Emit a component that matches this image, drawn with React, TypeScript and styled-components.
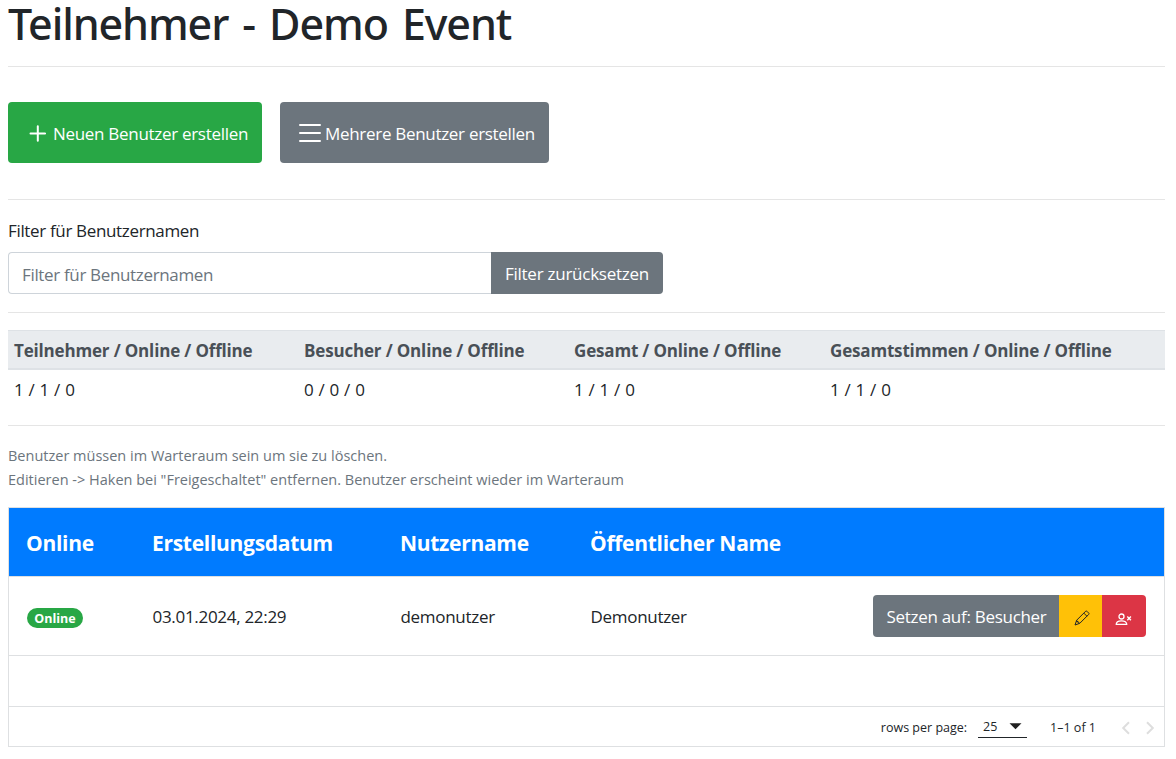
import React from "react";
import styled, { createGlobalStyle } from "styled-components";

const GlobalStyle = createGlobalStyle`
  *, *::before, *::after { box-sizing: border-box; }
  body {
    margin: 0;
    background: #fff;
    color: #212529;
    font-family: "Open Sans", "Noto Sans", sans-serif;
    font-size: 17px;
    line-height: 27px;
    letter-spacing: -0.3px;
  }
`;

const Page = styled.main`
  width: 1165px;
  padding-left: 8px;
  display: flex;
  flex-direction: column;
`;

const Title = styled.h1`
  margin: 0;
  height: 66px;
  font-family: "Noto Sans", sans-serif;
  font-weight: 500;
  font-size: 43px;
  line-height: 48px;
  letter-spacing: -1.1px;
  word-spacing: 4px;
`;

const Divider = styled.hr`
  width: 100%;
  height: 1px;
  margin: 0;
  border: 0;
  background: #e5e5e5;
`;

const CreateBar = styled.div`
  display: flex;
  gap: 18px;
  padding: 35px 0 36px;
`;

const Button = styled.button<{ $tone: "success" | "secondary" }>`
  display: flex;
  align-items: center;
  height: 61px;
  padding: 2px 0 0;
  border: 0;
  border-radius: 4px;
  color: #fff;
  background: ${(p) => (p.$tone === "success" ? "#28a745" : "#6c757d")};
  font: inherit;
  letter-spacing: -0.3px;
  white-space: nowrap;
`;

const AddButton = styled(Button)`
  width: 254px;
  padding-left: 21px;
  svg { margin: 0 7px 1px 0; }
`;

const BulkButton = styled(Button)`
  width: 269px;
  padding-left: 18px;
  svg { margin: 0 4px 1px 0; }
`;

const FilterSection = styled.section`
  display: flex;
  flex-direction: column;
  padding: 17px 0 18px;
`;

const Label = styled.label`
  height: 35px;
  line-height: 28px;
  letter-spacing: -0.34px;
`;

const InputGroup = styled.div`
  display: flex;
  width: 655px;
  height: 42px;
`;

const FilterInput = styled.input`
  width: 483px;
  padding: 3px 13px 0 13px;
  border: 1px solid #ced4da;
  border-right: 0;
  border-radius: 4px 0 0 4px;
  font: inherit;
  letter-spacing: -0.34px;
  &::placeholder { color: #6c757d; opacity: 1; }
`;

const ResetButton = styled(Button)`
  width: 172px;
  height: 42px;
  padding-top: 1px;
  justify-content: center;
  border-radius: 0 4px 4px 0;
  letter-spacing: -0.25px;
`;

const Stats = styled.table`
  width: 100%;
  margin: 17px 0 15px;
  border-collapse: separate;
  border-spacing: 0;
  table-layout: fixed;
  text-align: left;
`;

const StatCol = styled.col<{ $width: number }>`
  width: ${(p) => p.$width}px;
`;

const StatHead = styled.th`
  height: 40px;
  padding: 2px 5px 0 6px;
  border-top: 1px solid #dee2e6;
  border-bottom: 2px solid #dee2e6;
  background: #e9ecef;
  color: #495057;
  font-weight: 700;
  letter-spacing: -0.17px;
`;

const StatCell = styled.td`
  height: 40px;
  padding: 0 5px 2px 6px;
  letter-spacing: 0.2px;
`;

const Hint = styled.p`
  margin: 0;
  padding: 18px 0 15px;
  height: 81px;
  color: #6c757d;
  font-size: 14.5px;
  line-height: 24px;
  letter-spacing: 0;
`;

const UserPanel = styled.section`
  display: flex;
  flex-direction: column;
  border: 1px solid #dee0e2;
`;

const UserRow = styled.div`
  display: grid;
  grid-template-columns: 126px 248px 190px 282px 1fr;
  align-items: center;
  height: 79px;
  padding: 0 18px;
  border-bottom: 1px solid #dee0e2;
`;

const UserHeader = styled(UserRow)`
  height: 69px;
  padding: 3px 18px 0 17px;
  background: #007bff;
  color: #fff;
  font-size: 21px;
  font-weight: 700;
  letter-spacing: -0.29px;
`;

const Badge = styled.span`
  display: flex;
  width: 56px;
  height: 20px;
  margin-top: 4px;
  align-items: center;
  justify-content: center;
  border-radius: 10px;
  background: #28a745;
  color: #fff;
  font-size: 12.5px;
  font-weight: 700;
  letter-spacing: 0;
`;

const Cell = styled.span`
  margin-left: -0.5px;
`;

const Actions = styled.div`
  display: flex;
  width: 273px;
  height: 42px;
  overflow: hidden;
  border-radius: 4px;
`;

const StatusButton = styled(ResetButton)`
  width: 186px;
  padding: 0 0 0 1px;
  border-radius: 0;
  letter-spacing: -0.29px;
`;

const IconButton = styled.button<{ $danger?: boolean }>`
  display: flex;
  flex: none;
  width: ${(p) => (p.$danger ? 44 : 43)}px;
  align-items: center;
  justify-content: center;
  padding: ${(p) => (p.$danger ? "7px 1px 0 0" : "3px 0 0 2px")};
  border: 0;
  color: ${(p) => (p.$danger ? "#fff" : "#212529")};
  background: ${(p) => (p.$danger ? "#dc3545" : "#ffc107")};
`;

const EmptyRow = styled.div`
  height: 51px;
  border-bottom: 1px solid #dee0e2;
`;

const Pagination = styled.footer`
  display: flex;
  height: 39px;
  align-items: center;
  justify-content: flex-end;
  padding: 2px 0 0;
  font-size: 12.5px;
  letter-spacing: 0;
`;

const PageSize = styled.button`
  display: flex;
  width: 49px;
  height: 21px;
  margin: 0 23px 1px 11px;
  padding: 0 5px 0 5px;
  align-items: center;
  justify-content: space-between;
  border: 0;
  border-bottom: 1px solid #212529;
  background: none;
  color: inherit;
  font: inherit;
  line-height: 20px;
`;

const Arrows = styled.div`
  display: flex;
  margin-left: 18px;
  padding-right: 2px;
`;

const PlusIcon = () => (
  <svg width="17" height="17" viewBox="0 0 17 17" fill="none" stroke="#fff" strokeWidth="2" strokeLinecap="round">
    <path d="M8.8 1.3v14.4M1.5 8.5h14.6" />
  </svg>
);

const ListIcon = () => (
  <svg width="23" height="20" viewBox="0 0 23 20" fill="none" stroke="#fff" strokeWidth="2" strokeLinecap="round">
    <path d="M2 2h20M2 10h20M2 18h20" />
  </svg>
);

const PencilIcon = () => (
  <svg width="16" height="16" viewBox="0 0 16 16" fill="none" stroke="currentColor" strokeWidth="1" strokeLinejoin="round">
    <path d="M1 15 2.7 10.2 11.7 1.2a.8.8 0 0 1 1.1 0l2 2a.8.8 0 0 1 0 1.1L5.8 13.3zM9.8 3.1l3.1 3.1M2.7 10.2v1.3h1.4v1.4h1.4" />
  </svg>
);

const PersonRemoveIcon = () => (
  <svg width="17" height="13" viewBox="0 0 17 13" fill="none" stroke="currentColor" strokeWidth="1.3">
    <circle cx="6.5" cy="3.5" r="2.5" />
    <path d="M1.2 11.4c0-2.4 2.1-3.6 5.3-3.6s5.3 1.2 5.3 3.6z" strokeLinejoin="round" />
    <path d="m12.3 3.6 3.6 3.6m0-3.6-3.6 3.6" strokeWidth="1.4" />
  </svg>
);

const CaretIcon = () => (
  <svg width="13" height="7" viewBox="0 0 13 7">
    <path d="M.5.3h12l-6 6z" fill="#212121" />
  </svg>
);

const ChevronIcon = ({ next }: { next?: boolean }) => (
  <svg width="24" height="24" viewBox="0 0 24 24" fill="none" stroke="#dedede" strokeWidth="2">
    <path d={next ? "m9 6.2 5.8 5.8L9 17.8" : "M15 6.2 9.2 12l5.8 5.8"} />
  </svg>
);

const stats = [
  { label: "Teilnehmer / Online / Offline", value: "1 / 1 / 0", width: 290 },
  { label: "Besucher / Online / Offline", value: "0 / 0 / 0", width: 270 },
  { label: "Gesamt / Online / Offline", value: "1 / 1 / 0", width: 256 },
  { label: "Gesamtstimmen / Online / Offline", value: "1 / 1 / 0", width: 341 },
];

const userColumns = ["Online", "Erstellungsdatum", "Nutzername", "Öffentlicher Name"];

export default function App() {
  return (
    <>
      <GlobalStyle />
      <Page>
        <Title>Teilnehmer - Demo Event</Title>
        <Divider />
        <CreateBar>
          <AddButton $tone="success"><PlusIcon />Neuen Benutzer erstellen</AddButton>
          <BulkButton $tone="secondary"><ListIcon />Mehrere Benutzer erstellen</BulkButton>
        </CreateBar>
        <Divider />
        <FilterSection>
          <Label htmlFor="filter">Filter für Benutzernamen</Label>
          <InputGroup>
            <FilterInput id="filter" placeholder="Filter für Benutzernamen" />
            <ResetButton $tone="secondary">Filter zurücksetzen</ResetButton>
          </InputGroup>
        </FilterSection>
        <Divider />
        <Stats>
          <colgroup>{stats.map((s) => <StatCol key={s.label} $width={s.width} />)}</colgroup>
          <thead><tr>{stats.map((s) => <StatHead key={s.label}>{s.label}</StatHead>)}</tr></thead>
          <tbody><tr>{stats.map((s) => <StatCell key={s.label}>{s.value}</StatCell>)}</tr></tbody>
        </Stats>
        <Divider />
        <Hint>
          Benutzer müssen im Warteraum sein um sie zu löschen.<br />
          Editieren -&gt; Haken bei "Freigeschaltet" entfernen. Benutzer erscheint wieder im Warteraum
        </Hint>
        <UserPanel>
          <UserHeader>{userColumns.map((c) => <span key={c}>{c}</span>)}</UserHeader>
          <UserRow>
            <Badge>Online</Badge>
            <Cell>03.01.2024, 22:29</Cell>
            <Cell>demonutzer</Cell>
            <Cell>Demonutzer</Cell>
            <Actions>
              <StatusButton $tone="secondary">Setzen auf: Besucher</StatusButton>
              <IconButton aria-label="Bearbeiten"><PencilIcon /></IconButton>
              <IconButton $danger aria-label="Entfernen"><PersonRemoveIcon /></IconButton>
            </Actions>
          </UserRow>
          <EmptyRow />
          <Pagination>
            <span>rows per page:</span>
            <PageSize>25<CaretIcon /></PageSize>
            <span>1–1 of 1</span>
            <Arrows><ChevronIcon /><ChevronIcon next /></Arrows>
          </Pagination>
        </UserPanel>
      </Page>
    </>
  );
}
